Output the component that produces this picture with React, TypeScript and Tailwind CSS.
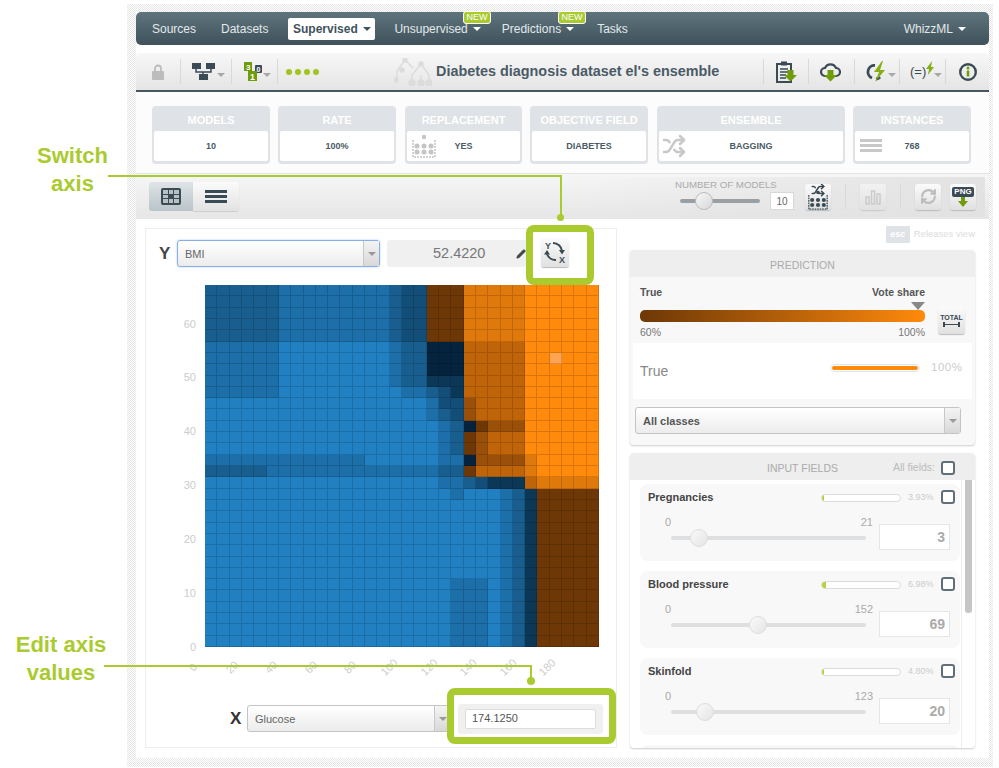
import { Pencil, RefreshCw, Shuffle } from "lucide-react";

const B0 = "#2080c1";
const B1 = "#1c6fa8";
const B2 = "#185f90";
const B3 = "#134e78";
const B4 = "#0c3858";
const B5 = "#06233d";
const O0 = "#ff8a0b";
const O1 = "#e0790b";
const O2 = "#bf6408";
const O3 = "#9a5008";
const O4 = "#6e3806";

type Span = [number, string];

// each row: list of [last column, colour]
function rowSpans(r: number): Span[] {
  if (r <= 4) return [[5, B2], [14, B1], [15, B2], [17, B3], [20, O4], [25, O1], [31, O0]];
  if (r <= 7) return [[5, B1], [14, B0], [15, B1], [17, B2], [20, B5], [25, O2], [31, O0]];
  if (r === 8) return [[5, B1], [14, B0], [15, B1], [17, B2], [20, B4], [25, O2], [31, O0]];
  if (r === 9) return [[5, B1], [15, B0], [17, B1], [18, B2], [19, B3], [20, B4], [25, O2], [31, O0]];
  if (r === 10) return [[17, B0], [18, B1], [20, B3], [21, O3], [25, O2], [31, O0]];
  if (r === 11) return [[17, B0], [18, B1], [19, B2], [20, B3], [21, O3], [25, O2], [31, O0]];
  if (r === 12) return [[18, B0], [19, B1], [20, B2], [21, B5], [22, O4], [25, O3], [31, O0]];
  if (r <= 14) return [[18, B0], [19, B1], [20, B2], [21, O4], [22, O3], [25, O2], [31, O0]];
  if (r === 15) return [[12, B1], [18, B0], [20, B1], [21, B5], [25, O3], [26, O1], [31, O0]];
  if (r === 16) return [[4, B2], [18, B1], [20, B2], [21, O4], [25, O2], [26, O1], [31, O0]];
  if (r === 17) return [[18, B0], [20, B1], [21, B2], [22, B3], [25, B4], [26, O2], [31, O1]];
  if (r === 18) return [[19, B0], [20, B1], [23, B0], [24, B1], [25, B2], [26, B4], [31, O4]];
  if (r <= 25) return [[23, B0], [24, B1], [25, B2], [26, B4], [31, O4]];
  return [[19, B0], [22, B1], [23, B0], [24, B1], [25, B2], [26, B4], [31, O4]];
}

function cellColor(r: number, c: number) {
  if (r === 6 && c === 28) return "#ffa552";
  const found = rowSpans(r).find((s) => c <= s[0]);
  return found ? found[1] : O0;
}

const cells = Array.from({ length: 32 * 32 }, (_, i) => cellColor(Math.floor(i / 32), i % 32));

function Divider() {
  return <div className="h-[25px] w-px bg-[#d9d9d9]" />;
}

function Caret({ className = "border-t-[#a8a8a8]" }: { className?: string }) {
  return <span className={`w-0 h-0 border-x-[4px] border-x-transparent border-t-[4px] ${className}`} />;
}

function NavItem({ label, className, caret }: { label: string; className: string; caret?: boolean }) {
  return (
    <div className={`flex items-center gap-[5px] pt-[1px] text-[12px] text-[#e3e8ea] ${className}`}>
      {label}
      {caret && <Caret className="border-t-white" />}
    </div>
  );
}

function NewBadge({ className }: { className: string }) {
  return (
    <div className={`absolute top-[-1px] w-[28px] h-[13px] flex items-center justify-center rounded-[3px] border border-white bg-[#a9cb2f] text-[9px] text-white ${className}`}>
      NEW
    </div>
  );
}

function Stat({ title, value, width, icon }: { title: string; value: string; width: string; icon?: React.ReactNode }) {
  return (
    <div className={`${width} h-[58px] rounded-[4px] bg-[#dfe2e6] px-[2px] pb-[3px] flex flex-col`}>
      <div className="h-[25px] shrink-0 pt-[3px] flex items-center justify-center text-[11px] font-bold text-white">{title}</div>
      <div className="relative flex-1 pt-[1px] rounded-[2px] bg-white flex items-center justify-center text-[9px] font-bold text-[#4a5b66]">
        {icon}
        {value}
      </div>
    </div>
  );
}

function ToolButton({ children, className = "" }: { children: React.ReactNode; className?: string }) {
  return (
    <div className={`w-[26px] h-[26px] rounded-[3px] bg-gradient-to-b from-[#fbfbfb] to-[#e0e0e0] shadow-[0_1px_1px_#bbb] flex items-center justify-center ${className}`}>
      {children}
    </div>
  );
}

function Select({ label, width, focused, bold }: { label: string; width: string; focused?: boolean; bold?: boolean }) {
  return (
    <div
      className={`${width} h-[27px] flex rounded-[3px] border bg-gradient-to-b from-white to-[#ececec] ${
        focused ? "border-[#86aee8] shadow-[0_0_2px_#a8c6f0]" : "border-[#c4c4c4]"
      }`}
    >
      <div className={`flex-1 flex items-center pl-[7px] pt-[1px] text-[11px] ${bold ? "font-bold text-[#555]" : "text-[#666]"}`}>{label}</div>
      <div className="w-[16px] border-l border-[#c8c8c8] bg-gradient-to-b from-[#f4f4f4] to-[#d8d8d8] flex items-center justify-center">
        <Caret className="border-t-[#999]" />
      </div>
    </div>
  );
}

function Checkbox() {
  return <div className="w-[14px] h-[14px] shrink-0 rounded-[3px] border-2 border-[#5f707a] bg-white" />;
}

function FieldRow({ name, share, pct, max, value, handle }: { name: string; share: number; pct: string; max: string; value: string; handle: number }) {
  return (
    <div className="h-[77px] mb-[10px] rounded-[8px] bg-[#f8f8f8] pl-[8px] pr-[5px] pt-[5px] shrink-0">
      <div className="flex items-center h-[16px]">
        <div className="flex-1 text-[11px] font-bold text-[#444]">{name}</div>
        <div className="w-[80px] h-[8px] mt-[2px] rounded-[4px] border border-[#dcdcdc] bg-white overflow-hidden">
          <div className="h-full bg-[#b5d334]" style={{ width: `${share}px` }} />
        </div>
        <div className="w-[40px] pl-[7px] mt-[2px] text-[9px] text-[#ccc]">{pct}</div>
        <Checkbox />
      </div>
      <div className="flex">
        <div className="w-[231px] pl-[15px] pr-[6px]">
          <div className="flex justify-between pl-[2px] text-[11px] text-[#aaa] pt-[9px]">
            <span>0</span>
            <span>{max}</span>
          </div>
          <div className="relative h-[4px] mt-[5px] ml-[8px] mr-[7px] rounded-[2px] bg-[#dedfe1]">
            <div
              className="absolute top-[-7px] w-[18px] h-[18px] rounded-full border border-[#ddd] bg-gradient-to-br from-[#fafafa] to-[#e4e4e4]"
              style={{ left: `${handle}px` }}
            />
          </div>
        </div>
        <div className="w-[71px] h-[26px] mt-[19px] border border-[#e6e6e6] bg-white flex items-center justify-end pr-[4px] text-[14px] font-bold text-[#aaa]">
          {value}
        </div>
      </div>
    </div>
  );
}

function DownArrow({ x, y }: { x: number; y: number }) {
  return <path d={`M${x - 3} ${y}h6v5h3.5l-6.500 6.500l-6.500-6.500h3.500z`} fill="#6f9c0a" />;
}

function EnsembleGrid({ color, size = 24 }: { color: string; size?: number }) {
  return (
    <svg width={size} height={size} viewBox="0 0 24 24" fill={color}>
      <path d="M1 6v17h22V6" fill="none" stroke={color} strokeWidth="1.500" strokeDasharray="2 1" />
      {[5, 12, 19].map((x) => [12, 18].map((y) => <circle key={`${x}-${y}`} cx={x} cy={y} r="2.500" />))}
      <circle cx="12" cy="3" r="2.200" />
    </svg>
  );
}

const xTicks = ["0", "20", "40", "60", "80", "100", "120", "140", "160", "180"];
const yTicks = ["60", "50", "40", "30", "20", "10", "0"];

export default function App() {
  return (
    <div className="relative w-[999px] h-[768px] overflow-hidden bg-white font-['Liberation_Sans',Arial,sans-serif]">
      {/* dotted frame */}
      <div className="ml-[127px] mt-[4px] w-[866px] h-[763px] pl-[9px] pr-[4px] pt-[8px] bg-[repeating-conic-gradient(#e6e6e6_0%_25%,#ffffff_0%_50%)] bg-[length:2px_2px] absolute top-0 left-0">
        <div className="w-[853px] h-[746px] bg-white flex flex-col">
          {/* nav */}
          <div className="relative h-[33px] shrink-0 rounded-[5px] bg-gradient-to-b from-[#5f747d] to-[#3f525c] flex items-center">
            <NavItem label="Sources" className="ml-[16px]" />
            <NavItem label="Datasets" className="ml-[25px]" />
            <div className="ml-[20px] mt-[1px] w-[87px] h-[22px] rounded-[2px] bg-white flex items-center justify-center gap-[5px] text-[12px] font-bold text-[#3f525c]">
              Supervised
              <Caret className="border-t-[#3f525c]" />
            </div>
            <NavItem label="Unsupervised" caret className="ml-[19px]" />
            <NavItem label="Predictions" caret className="ml-[21px]" />
            <NavItem label="Tasks" className="ml-[23px]" />
            <NavItem label="WhizzML" caret className="ml-auto mr-[23px]" />
            <NewBadge className="left-[327px]" />
            <NewBadge className="left-[422px]" />
          </div>

          {/* title bar */}
          <div className="h-[39px] mt-[8px] shrink-0 rounded-t-[4px] border-b-2 border-[#46575f] bg-gradient-to-b from-[#f7f7f7] to-[#e5e5e5] flex items-center">
            <svg className="ml-[16px]" width="12" height="16" viewBox="0 0 12 16">
              <path d="M3 7V4.500a3 3 0 0 1 6 0V7" fill="none" stroke="#bcbcbc" strokeWidth="1.800" />
              <rect x="0" y="7" width="12" height="9" rx="1" fill="#bcbcbc" />
            </svg>
            <div className="ml-[16px]"><Divider /></div>
            <svg className="ml-[11px]" width="23" height="17" viewBox="0 0 23 17" fill="#3b4b55">
              <rect x="0" y="0" width="9" height="6" />
              <rect x="14" y="0" width="9" height="6" />
              <rect x="7" y="11" width="9" height="6" />
              <path d="M4 6v3h15V6M11 9v2" fill="none" stroke="#3b4b55" strokeWidth="1.500" />
            </svg>
            <Caret className="ml-[2px] mt-[7px] border-t-[#a8a8a8]" />
            <div className="ml-[6px]"><Divider /></div>
            <svg className="ml-[12px]" width="18" height="19" viewBox="0 0 18 19">
              <rect x="11" y="3" width="7" height="8" rx="1" fill="#3b4b55" />
              <rect x="0" y="0" width="8" height="9" fill="#6f9c0a" />
              <rect x="4" y="9" width="9" height="10" fill="#6f9c0a" />
              <text x="2" y="8" fontSize="8" fontWeight="bold" fill="#fff">3</text>
              <text x="12.500" y="9.500" fontSize="7" fontWeight="bold" fill="#fff">0</text>
              <text x="6" y="17.500" fontSize="9" fontWeight="bold" fill="#fff">1</text>
            </svg>
            <Caret className="ml-[1px] mt-[7px] border-t-[#a8a8a8]" />
            <div className="ml-[6px]"><Divider /></div>
            <div className="ml-[8px] flex gap-[3px]">
              {[0, 1, 2, 3].map((d) => (
                <span key={d} className="w-[6px] h-[6px] rounded-full bg-[#a3c41f]" />
              ))}
            </div>
            <svg className="ml-[75px]" width="38" height="28" viewBox="0 0 38 28" fill="none" stroke="#dcdcdc" strokeWidth="1.500">
              <circle cx="11" cy="2" r="2" fill="#dcdcdc" />
              <circle cx="2" cy="22" r="2" fill="#dcdcdc" />
              <circle cx="8" cy="12" r="2" fill="#dcdcdc" />
              <path d="M11 2L3 13v9M11 2l8 8" />
              <circle cx="27" cy="6" r="2" fill="#dcdcdc" />
              <circle cx="18" cy="25" r="3" fill="#dcdcdc" />
              <circle cx="27" cy="25" r="3" fill="#dcdcdc" />
              <circle cx="35" cy="25" r="3" fill="#dcdcdc" />
              <path d="M27 6l-9 11v8M27 6l8 11v8M27 17v8" />
            </svg>
            <div className="ml-[4px] pt-[1px] w-[283px] text-[14.4px] font-bold text-[#4a5b66] whitespace-nowrap">Diabetes diagnosis dataset el's ensemble</div>
            <div className="ml-[44px]"><Divider /></div>
            <svg className="ml-[12px]" width="21" height="22" viewBox="0 0 21 22">
              <path d="M1 3h14v18H1z" fill="none" stroke="#3b4b55" strokeWidth="2" />
              <rect x="5" y="0.500" width="6" height="4" fill="#3b4b55" />
              <path d="M4 8h8M4 11h8M4 14h6M4 17h6" stroke="#3b4b55" strokeWidth="1.300" />
              <DownArrow x={14.500} y={9} />
            </svg>
            <div className="ml-[11px]"><Divider /></div>
            <svg className="ml-[11px]" width="21" height="22" viewBox="0 0 21 22">
              <path d="M5 15a4 4 0 0 1 0-8a6 6 0 0 1 11 0a4 4 0 0 1 0 8z" fill="none" stroke="#3b4b55" strokeWidth="2.200" />
              <DownArrow x={10.500} y={9} />
            </svg>
            <div className="ml-[13px]"><Divider /></div>
            <svg className="ml-[11px]" width="21" height="21" viewBox="0 0 21 21">
              <path d="M9 4.500a6.500 6.500 0 0 0-3 12.500M14 16a6 6 0 0 1-4 2" fill="none" stroke="#3b4b55" strokeWidth="2.800" />
              <path d="M16 0L8 11h5l-4 10l10-12h-5l3-9z" fill="#86ad14" />
            </svg>
            <Caret className="ml-[1px] mt-[7px] border-t-[#a8a8a8]" />
            <div className="ml-[3px]"><Divider /></div>
            <div className="ml-[10px] text-[13px] text-[#3b4b55] whitespace-nowrap">(=)</div>
            <svg className="mb-[8px]" width="8" height="14" viewBox="0 0 8 14">
              <path d="M6 0L0 8h3l-1 6l6-8H5z" fill="#86ad14" />
            </svg>
            <Caret className="mt-[7px] border-t-[#a8a8a8]" />
            <div className="ml-[3px]"><Divider /></div>
            <svg className="ml-[13px]" width="18" height="18" viewBox="0 0 18 18">
              <circle cx="9" cy="9" r="7.800" fill="none" stroke="#3b4b55" strokeWidth="2.400" />
              <rect x="7.700" y="7.500" width="2.600" height="6" fill="#6f9c0a" />
              <circle cx="9" cy="5" r="1.500" fill="#6f9c0a" />
            </svg>
          </div>

          {/* stats */}
          <div className="h-[82px] shrink-0 border-b border-[#e4e4e4] bg-[#fcfcfc] flex pl-[16px] pt-[14px]">
            <Stat title="MODELS" value="10" width="w-[118px]" />
            <div className="w-[8px]" />
            <Stat title="RATE" value="100%" width="w-[118px]" />
            <div className="w-[9px]" />
            <Stat
              title="REPLACEMENT"
              value="YES"
              width="w-[117px]"
              icon={<div className="absolute left-[5px] top-[3px]"><EnsembleGrid color="#c4c4c4" /></div>}
            />
            <div className="w-[8px]" />
            <Stat title="OBJECTIVE FIELD" value="DIABETES" width="w-[118px]" />
            <div className="w-[9px]" />
            <Stat
              title="ENSEMBLE"
              value="BAGGING"
              width="w-[188px]"
              icon={<Shuffle className="absolute left-[3px] top-[3px] text-[#c8c8c8]" size={24} strokeWidth={2.500} />}
            />
            <div className="w-[8px]" />
            <Stat
              title="INSTANCES"
              value="768"
              width="w-[118px]"
              icon={
                <div className="absolute left-[5px] top-[8px] w-[22px] flex flex-col gap-[2px]">
                  <span className="h-[3px] bg-[#c8c8c8]" />
                  <span className="h-[3px] bg-[#c8c8c8]" />
                  <span className="h-[3px] bg-[#c8c8c8]" />
                </div>
              }
            />
          </div>

          {/* view toolbar */}
          <div className="h-[45px] shrink-0 bg-gradient-to-b from-[#f6f6f6] to-[#e6e6e6] flex items-center pl-[13px]">
            <div className="w-[44px] h-[29px] rounded-l-[3px] bg-gradient-to-b from-[#dfe4e7] to-[#b9c4ca] flex items-center justify-center">
              <div className="w-[20px] h-[17px] rounded-[2px] bg-[#3b4b55] grid grid-cols-3 gap-[1px] p-[2px]">
                {[0, 1, 2, 3, 4, 5, 6, 7, 8].map((i) => (
                  <span key={i} className={i === 4 ? "bg-[#3b4b55]" : "bg-[#b6c0c5]"} />
                ))}
              </div>
            </div>
            <div className="w-[46px] h-[29px] rounded-r-[3px] bg-gradient-to-b from-[#fbfbfb] to-[#e2e2e2] shadow-[0_1px_1px_#ccc] flex flex-col gap-[2px] items-center justify-center">
              <span className="w-[22px] h-[3px] bg-[#3b4b55]" />
              <span className="w-[22px] h-[3px] bg-[#3b4b55]" />
              <span className="w-[22px] h-[3px] bg-[#3b4b55]" />
            </div>
            <div className="ml-[346px] w-[400px] h-[40px] bg-gradient-to-r from-transparent to-[#e2e2e2] flex items-center">
              <div className="ml-[90px] w-[112px] relative h-full">
                <div className="pt-[1px] text-[9.7px] text-[#aaa] whitespace-nowrap">NUMBER OF MODELS</div>
                <div className="relative mt-[7px] ml-[5px] w-[80px] h-[4px] rounded-[2px] bg-[#999fa3]">
                  <div className="absolute left-[15px] top-[-7px] w-[18px] h-[18px] rounded-full border border-[#bbb] bg-gradient-to-br from-[#f8f8f8] to-[#d8d8d8]" />
                </div>
              </div>
              <div className="ml-[-17px] mt-[9px] w-[24px] h-[18px] border border-[#d8d8d8] bg-white flex items-center justify-center text-[10px] text-[#666]">10</div>
              <div className="ml-[11px]">
                <ToolButton className="relative overflow-hidden">
                  <Shuffle className="absolute left-[6px] top-[-1px] text-[#3b4b55]" size={14} strokeWidth={2.500} />
                  <div className="mt-[6px]">
                    <EnsembleGrid color="#3b4b55" size={20} />
                  </div>
                </ToolButton>
              </div>
              <div className="ml-[14px]"><Divider /></div>
              <ToolButton className="ml-[14px] opacity-60">
                <svg width="16" height="16" viewBox="0 0 16 16" fill="none" stroke="#bbb" strokeWidth="1.500">
                  <rect x="1" y="8" width="3" height="7" />
                  <rect x="6.500" y="2" width="3" height="13" />
                  <rect x="12" y="5" width="3" height="10" />
                </svg>
              </ToolButton>
              <div className="ml-[14px]"><Divider /></div>
              <ToolButton className="ml-[14px]">
                <RefreshCw className="text-[#bcbcbc]" size={17} strokeWidth={3} />
              </ToolButton>
              <ToolButton className="ml-[9px] flex-col">
                <span className="px-[2px] rounded-[2px] bg-[#3b4b55] text-[8px] leading-[10px] font-bold text-white">PNG</span>
                <svg width="12" height="10" viewBox="0 0 12 10">
                  <path d="M4 0h4v4h3l-5 6l-5-6h3z" fill="#6f9c0a" />
                </svg>
              </ToolButton>
            </div>
          </div>

          {/* main */}
          <div className="flex pl-[9px] flex-1 min-h-0">
            <div className="w-[472px] h-[520px] mt-[9px] border border-[#eeeeee]">
              <div className="flex items-center mt-[11px] pl-[13px]">
                <div className="w-[18px] text-[17px] font-bold text-[#444]">Y</div>
                <Select label="BMI" width="w-[203px]" focused />
                <div className="ml-[7px] w-[140px] h-[27px] rounded-[3px] bg-[#f0f0f0] flex items-center pl-[46px] text-[14.500px] text-[#777]">
                  52.4220
                </div>
                <Pencil className="ml-[-11px] fill-[#444] text-[#444]" size={10} />
                <ToolButton className="ml-[15px] !h-[29px] !w-[28px] mt-[-3px]">
                  <svg width="26" height="26" viewBox="0 0 26 26">
                    <text x="3" y="10" fontSize="9" fontWeight="bold" fill="#3b4b55">Y</text>
                    <text x="17" y="24" fontSize="9" fontWeight="bold" fill="#3b4b55">X</text>
                    <path d="M11 4a9 9 0 0 1 9 8M5 15a9 9 0 0 0 9 6" fill="none" stroke="#3b4b55" strokeWidth="2" />
                    <path d="M17 11h6l-3 4.500zM2 15.500h6l-3-4.500z" fill="#3b4b55" />
                  </svg>
                </ToolButton>
              </div>

              <div className="flex mt-[18px]">
                <div className="w-[51px] h-[362px] pt-[12px] flex flex-col items-end text-[11px] text-[#ccc] pr-[1px]">
                  {yTicks.map((t) => (
                    <div key={t} className="h-[53.830px] shrink-0 flex items-center">{t}</div>
                  ))}
                </div>
                <div className="ml-[8px] w-[394px] h-[362px] grid grid-cols-[repeat(32,1fr)] grid-rows-[repeat(32,1fr)]">
                  {cells.map((color, i) => (
                    <div key={i} className="border-r border-b border-black/15" style={{ backgroundColor: color }} />
                  ))}
                </div>
              </div>

              <div className="flex ml-[27px] mt-[12px]">
                {xTicks.map((t) => (
                  <div key={t} className="w-[39.400px] flex justify-center text-[11px] text-[#ccc]">
                    <span className="-rotate-45">{t}</span>
                  </div>
                ))}
              </div>

              <div className="flex items-center mt-[28px] ml-[84px]">
                <div className="w-[17px] text-[17px] font-bold text-[#333]">X</div>
                <Select label="Glucose" width="w-[204px]" />
                <div className="ml-[7px] w-[145px] h-[30px] rounded-[3px] bg-[#f0f0f0] flex items-center justify-center">
                  <div className="w-[131px] h-[20px] rounded-[2px] border border-[#ddd] bg-white flex items-center pl-[6px] text-[11px] text-[#555]">
                    174.1250
                  </div>
                </div>
              </div>
            </div>

            <div className="ml-[13px] w-[345px] mt-[7px] flex flex-col">
              <div className="h-[17px] flex items-center justify-end gap-[4px]">
                <div className="w-[24px] h-[17px] rounded-[1px] bg-[#dfe2e6] flex items-center justify-center text-[9px] italic font-bold text-white">esc</div>
                <div className="text-[9.500px] text-[#ddd]">Releases view</div>
              </div>

              <div className="mt-[7px] h-[195px] rounded-[4px] bg-[#f8f8f8] shadow-[0_1px_2px_#ccc] overflow-hidden">
                <div className="h-[27px] pt-[4px] bg-[#eeeeee] flex items-center justify-center text-[10.500px] text-[#aaa]">PREDICTION</div>
                <div className="relative px-[10px] h-[66px]">
                  <div className="flex justify-between w-[285px] pt-[8px] text-[10.500px] font-bold text-[#555]">
                    <span>True</span>
                    <span>Vote share</span>
                  </div>
                  <div className="flex justify-end w-[285px] h-[9px] pt-[1px]">
                    <span className="w-0 h-0 border-x-[7px] border-x-transparent border-t-[8px] border-t-[#888]" />
                  </div>
                  <div className="w-[285px] h-[12px] rounded-[5px] bg-gradient-to-r from-[#6e3806] to-[#ff8a0b]" />
                  <div className="flex justify-between w-[285px] pt-[3px] text-[10.500px] text-[#777]">
                    <span>60%</span>
                    <span>100%</span>
                  </div>
                  <ToolButton className="absolute right-[10px] top-[30px] flex-col !h-[27px] !w-[27px]">
                    <span className="text-[7px] leading-[8px] font-bold text-[#3b4b55]">TOTAL</span>
                    <span className="w-[17px] h-[5px] border-x-2 border-[#3b4b55] flex items-center">
                      <span className="w-full h-[1.500px] bg-[#3b4b55]" />
                    </span>
                  </ToolButton>
                </div>
                <div className="mx-[3px] h-[56px] bg-white flex items-center pl-[7px]">
                  <div className="w-[190px] text-[14px] text-[#888]">True</div>
                  <div className="w-[90px] h-[8px] rounded-[4px] border border-[#e4e4e4] p-[1px] mb-[6px]">
                    <div className="h-full rounded-[3px] bg-[#ff8a0b]" />
                  </div>
                  <div className="ml-[11px] mb-[6px] text-[11.500px] tracking-[0.5px] text-[#ccc]">100%</div>
                </div>
                <div className="mt-[8px] ml-[5px]">
                  <Select label="All classes" width="w-[326px]" bold />
                </div>
              </div>

              <div className="mt-[8px] h-[295px] rounded-[4px] bg-white shadow-[0_1px_2px_#ccc] overflow-hidden flex flex-col">
                <div className="relative h-[27px] shrink-0 pt-[5px] bg-[#eeeeee] flex items-center justify-center text-[10.500px] text-[#aaa]">
                  INPUT FIELDS
                  <div className="absolute right-[20px] top-[7px] flex items-center gap-[6px] text-[10.500px] text-[#bbb]">
                    All fields:
                    <Checkbox />
                  </div>
                </div>
                <div className="flex flex-1 min-h-0">
                  <div className="w-[332px] pt-[4px] pl-[10px] pr-[1px] border-r border-[#eeeeee] flex flex-col overflow-hidden">
                    <FieldRow name="Pregnancies" share={2} pct="3.93%" max="21" value="3" handle={19} />
                    <FieldRow name="Blood pressure" share={4} pct="6.98%" max="152" value="69" handle={78} />
                    <FieldRow name="Skinfold" share={2} pct="4.80%" max="123" value="20" handle={25} />
                    <div className="h-[77px] rounded-[8px] bg-[#f8f8f8] shrink-0" />
                  </div>
                  <div className="ml-[3px] w-[7px] h-[133px] rounded-b-[3px] bg-[#c6c6c6]" />
                </div>
              </div>
            </div>
          </div>
        </div>
      </div>

      {/* callouts */}
      <div className="absolute left-[27px] top-[142px] w-[91px] text-center text-[22px] leading-[28px] font-bold text-[#a9cb2f]">
        Switch
        <br />
        axis
      </div>
      <div className="absolute left-[6px] top-[631px] w-[110px] text-center text-[22px] leading-[28px] font-bold text-[#a9cb2f]">
        Edit axis
        <br />
        values
      </div>
      <div className="absolute left-[108px] top-[175px] w-[454px] h-[2px] bg-[#a9cb2f]" />
      <div className="absolute left-[560px] top-[175px] w-[2px] h-[42px] bg-[#a9cb2f]" />
      <div className="absolute left-[557px] top-[214px] w-[7px] h-[7px] rounded-full bg-[#a9cb2f]" />
      <div className="absolute left-[526px] top-[225px] w-[68px] h-[60px] rounded-[8px] border-[7px] border-[#a9cb2f]" />
      <div className="absolute left-[104px] top-[665px] w-[428px] h-[2px] bg-[#a9cb2f]" />
      <div className="absolute left-[530px] top-[665px] w-[2px] h-[16px] bg-[#a9cb2f]" />
      <div className="absolute left-[527px] top-[677px] w-[8px] h-[8px] rounded-full bg-[#a9cb2f]" />
      <div className="absolute left-[447px] top-[688px] w-[169px] h-[56px] rounded-[8px] border-[7px] border-[#a9cb2f]" />
    </div>
  );
}
